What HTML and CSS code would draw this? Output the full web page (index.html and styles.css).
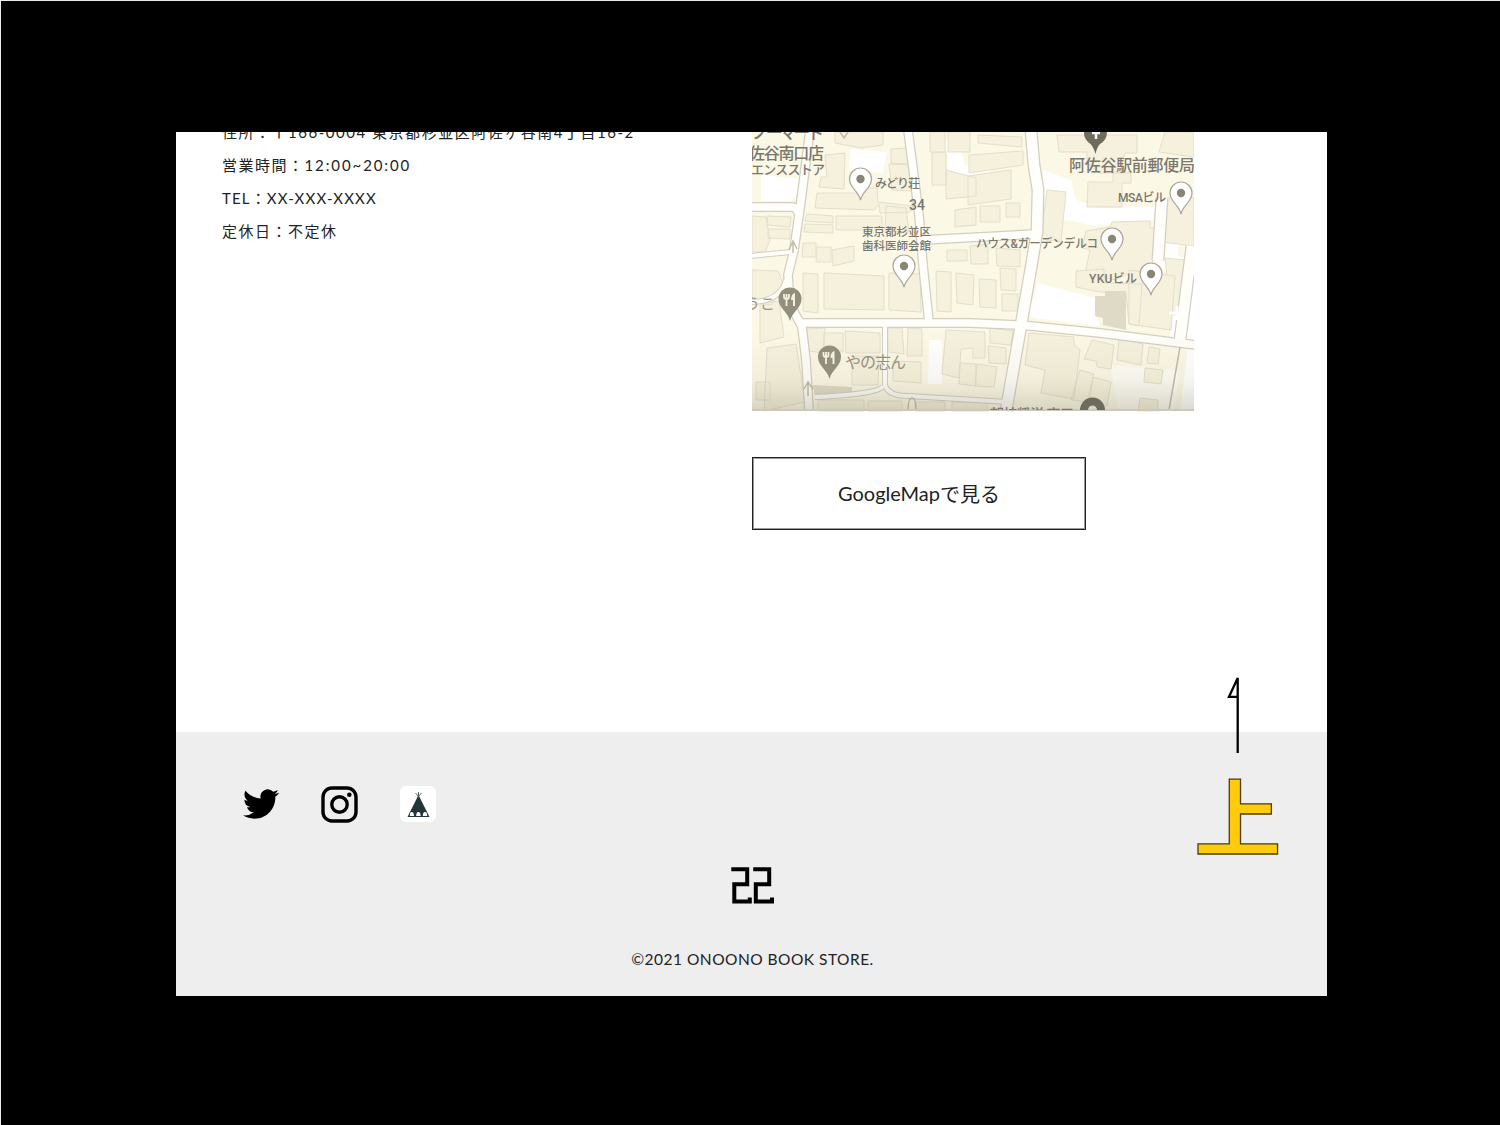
FILE: index.html
```html
<!DOCTYPE html>
<html lang="ja">
<head>
<meta charset="utf-8">
<title>ONOONO BOOK STORE</title>
<link rel="stylesheet" href="styles.css">
</head>
<body>
<div class="stage">
  <div class="window">
    <main class="access">
      <div class="info">
        <p class="info-line line-address">住所：〒166-0004 東京都杉並区阿佐ヶ谷南4丁目16-2</p>
        <p class="info-line line-hours">営業時間：<span>12:00~20:00</span></p>
        <p class="info-line line-tel"><span>TEL</span>：<span>XX-XXX-XXXX</span></p>
        <p class="info-line">定休日：不定休</p>
      </div>
      <div class="place">
        <svg class="map" viewBox="752 132 442 280" role="img" aria-label="地図">
          <defs>
            <linearGradient id="shade" x1="0" y1="0" x2="0" y2="1">
              <stop offset="0" stop-color="#8b8768" stop-opacity="0"/>
              <stop offset=".6" stop-color="#8b8768" stop-opacity=".08"/>
              <stop offset="1" stop-color="#77745c" stop-opacity=".28"/>
            </linearGradient>
            <g id="pin"><path d="M0 21C-2 12-11 9-11 0A11 11 0 0 1 11 0C11 9 2 12 0 21Z"/><circle r="4.2"/></g>
            <g id="food"><path class="food-body" d="M0 22C-2 13-11.500 9-11.500 0A11.500 11.500 0 0 1 11.500 0C11.500 9 2 13 0 22Z"/><path class="food-fork" d="M-6-5v3q0 2 2.500 2t2.500-2v-3M-3.500-5V7"/><path class="food-knife" d="M3 7V1H1Q1-5 5-6V7z"/></g>
          </defs>
          <rect class="ground" x="752" y="132" width="442" height="279"/>
          <g class="blank">
            <path d="M850 149l37 3-4 21-34-3zM761 175l39 4-3 15-5 7H761zM946 140h12l7 25 16 1 7-7 3 16H948zM1043 170l28 10 5 20 24 8 55-1-2 13-60 6-20-5-28-3z"/>
            <path d="M1038 283l34 9 23 6v16l5 12-66-8-6-5zM929 340h13v44h-14zM1160 206l20 5-2 45 16 6v150h-14l8-66-18-8 3-60-20-20z"/>
            <path opacity=".6" d="M1110 365l70 5-6 42h-55z"/>
          </g>
          <g class="building">
            <path d="M825 155l20-2-1 36-25-2 2-10h6zM817 193h40v-5h20l1 14 35 4-3 6-30 1-1-9-5 6-59-2zM807 214l26 2v7l-28-2zM805 224l28 1v8l-29-1zM836 216h46v14h-46zM886 206l20 2 3 24-24-1zM752 216l14 1 4 23-5 12h-13zM767 216l24 1-1 10-22-2zM768 229h22v10l-22-1zM803 243h13v14h-14zM817 247h14v15h-15zM832 250l22-4v15l-21 5z"/>
            <path d="M891 149l16-1 2 16-18-1zM889 164l23 1 3 26-23-1zM835 132h48v13l-22 3-26-5zM930 132h15v20h-15zM932 153l14-1v33h-14zM948 132h22v20h-22zM946 170l30 8v18l-30 3zM978 135l44 2v10l-44-4zM969 155l54-4v14l-54 8zM968 176l43-6v29l-43 6zM980 206h20v16h-20zM1006 203h14v14h-14zM955 210l21-3v18l-21 2zM947 250h20v11h-20zM970 246l18-2v20h-17zM996 248l24 2v17l-23-1z"/>
            <path d="M1057 135h80v18h-12l-5 20h-21l-12-10v-11h-28zM1165 132h29v25l-35-5zM1047 190l19 2-5 50-20-3zM1088 182h25v-9h18v10h-9v24h-35zM1086 231l24-4 2-5 38-1v7h5l-4 54 3 6-18-3-1-9-8-2-11 6-31-7 5-23-8-2zM1167 198h27v48l-32-4zM1165 258l20 2-4 56-10-2z"/>
            <path d="M803 273l15 1v39l-15-2zM824 273l60 3v34l-60-1zM889 273l31 1 1 38-32-2zM936 271l15 1v40l-14-1zM956 273l18 2-1 30-16-2zM979 279l17 1v28l-16-1zM1000 268l16 1v22l-15-1zM1002 294h16v17h-16zM752 270l26 1 6 14-13 20-19-2zM760 304l19-3 5 36-24 6zM767 348l29-4 9 58-41 9zM756 382h14v18h-14zM807 329l18-1-2 25-14-2zM824 333h19v19h-19zM845 331l35 2v20h-34zM852 356h27l-1 29h-26zM888 328h14l2 26-16-2zM908 328l14 1v27h-15zM893 361l28 1v21l-28-2zM946 330l39 2v26h-12v-10l-12 1-2 29-17-4zM960 363l16 1v22l-17-2zM977 364l20 3-3 20-19-1z"/>
            <path d="M990 328l23 3-2 14-21-2zM988 346l18 2v16l-17-1zM1029 333l45 4v8l6 5-6 49-33-6 4-23-20-5zM1080 370l14 4-7 28-16-2zM1093 377l18 5-4 24h-18zM1092 340l22 5-3 24-14-2-1-6-12-2zM1119 339l24 5-2 21-24-5zM1149 347l11 2-2 15-11-1zM1145 368l18 2-2 14-17-2zM1076 271l28-2v14l38 1-3 42-10-2-3-31-26-1-24-5zM1129 270l46 6-4 54-42-6z"/>
            <path d="M818 400h46v11h-46zM868 401h34v10h-34zM915 402h30v9h-30zM952 402h35v9h-35zM1140 398l18 2v11h-20z"/>
          </g>
          <path class="building-dark" d="M1105 291h21v39l-23-5v-7l-8-2v-20h10zM813 385l39 2v9l-37 1z"/>
          <g class="road-edge">
            <path class="wide" d="M810 130L801 201 794 250 788 275 790 304 802 327 806 360 809 411"/>
            <path class="wide" d="M908 130L919 215 923 265 929 322"/>
            <path class="wide-xl" d="M1031 130L1034 165 1038 190 1037 232 1031 268 1021 325 1006 411"/>
            <path class="wide" d="M798 323H970L1021 325M1021 325L1100 333 1196 345"/>
            <path class="wide" d="M923 240L1036 234M750 207H791Q798 207 799 216"/>
            <path class="thin" d="M750 256L791 252M750 302Q780 302 786 280M885 325V385Q888 396 908 396L1008 402M883 386Q880 394 815 397"/>
            <path class="wide-xl" d="M1162 198L1158 260M1192 246L1180 340"/>
          </g>
          <g class="road">
            <path class="wide" d="M810 130L801 201 794 250 788 275 790 304 802 327 806 360 809 411"/>
            <path class="wide" d="M908 130L919 215 923 265 929 322"/>
            <path class="wide-xl" d="M1031 130L1034 165 1038 190 1037 232 1031 268 1021 325 1006 411"/>
            <path class="wide" d="M798 323H970L1021 325M1021 325L1100 333 1196 345"/>
            <path class="wide" d="M923 240L1036 234M750 207H791Q798 207 799 216"/>
            <path class="thin" d="M750 256L791 252M750 302Q780 302 786 280M885 325V385Q888 396 908 396L1008 402M883 386Q880 394 815 397"/>
            <path class="wide-xl" d="M1162 198L1158 260M1192 246L1180 340"/>
          </g>
          <path class="road-line" d="M1180 347L1169 410M789 250l4-9 4 8M793 241v12M804 389l4-7 5 7M808 383v13M908 410q0-12 4-12t4 12M840 132l4 6 4-6"/>
          <path class="crossing" d="M1169 313h16M1177 306v14"/>
          <rect x="752" y="330" width="442" height="81" fill="url(#shade)"/>
          <path class="map-edge" d="M752 410H1194"/>
          <use href="#pin" x="860.5" y="179"/>
          <use href="#pin" x="904" y="266"/>
          <use href="#pin" x="1181" y="193"/>
          <use href="#pin" x="1112" y="239"/>
          <use href="#pin" x="1151" y="274"/>
          <use href="#food" x="790" y="299"/>
          <use href="#food" x="829.500" y="357"/>
          <path class="pin-dark" d="M1084 132h23q0 8-7 12-3 3-4.500 10-2-7-5-10-7-5-6.500-12zM1080 410a12.500 12.500 0 0 1 25 0h-8a4.500 4.500 0 0 0-9 0z"/>
          <path class="pin-mark" d="M1092 133h8M1096 132v7"/>
          <g class="label">
            <text x="752" y="139" font-size="17" textLength="72">ノーマート</text>
            <text x="749" y="159" font-size="16" textLength="75">佐谷南口店</text>
            <text x="751" y="174" font-size="13" textLength="74">エンスストア</text>
            <text x="875" y="188" font-size="12" textLength="45">みどり荘</text>
            <text x="909" y="210" font-size="14" textLength="16">34</text>
            <text x="862" y="236" font-size="11.500" textLength="69">東京都杉並区</text>
            <text x="862" y="249.500" font-size="11.500" textLength="69">歯科医師会館</text>
            <text x="1069" y="171" font-size="16" textLength="126">阿佐谷駅前郵便局</text>
            <text x="1118" y="202" font-size="12" textLength="48">MSAビル</text>
            <text x="976" y="248" font-size="12" textLength="122" lengthAdjust="spacingAndGlyphs">ハウス&amp;ガーデンデルコ</text>
            <text x="1089" y="283" font-size="12" textLength="48">YKUビル</text>
            <text class="soft" x="745" y="309" font-size="15" textLength="30">うこ</text>
            <text class="soft" x="845" y="368" font-size="16" textLength="61">やの志ん</text>
          </g>
          <svg x="985" y="404" width="90" height="6" viewBox="985 404 90 6"><text class="label" x="990" y="419" font-size="14" textLength="84">朝焼醤洋 南口</text></svg>
        </svg>
        <a class="map-button" href="#">GoogleMap<span>で見る</span></a>
      </div>
    </main>
    <footer class="footer">
      <nav class="social">
        <a href="#" aria-label="Twitter"><svg class="twitter" viewBox="0 0 24 24"><path d="M23.953 4.57a10 10 0 01-2.825.775 4.958 4.958 0 002.163-2.723c-.951.555-2.005.959-3.127 1.184a4.920 4.920 0 00-8.384 4.482C7.690 8.095 4.067 6.130 1.640 3.162a4.822 4.822 0 00-.666 2.475c0 1.710.870 3.213 2.188 4.096a4.904 4.904 0 01-2.228-.616v.060a4.923 4.923 0 003.946 4.827 4.996 4.996 0 01-2.212.085 4.936 4.936 0 004.604 3.417 9.867 9.867 0 01-6.102 2.105c-.390 0-.779-.023-1.170-.067a13.995 13.995 0 007.557 2.209c9.053 0 13.998-7.496 13.998-13.985 0-.210 0-.420-.015-.630A9.935 9.935 0 0024 4.590z"/></svg></a>
        <a href="#" aria-label="Instagram"><svg class="instagram" viewBox="0 0 37 37"><rect x="2" y="2" width="33" height="33" rx="9"/><circle cx="18.500" cy="18.500" r="7.700"/><circle class="dot" cx="28.300" cy="8.800" r="2.300"/></svg></a>
        <a href="#" aria-label="Shop"><svg class="shop" viewBox="0 0 36 36"><rect width="36" height="36" rx="6" fill="#fff"/><path d="M18.500 9L29.500 31H7.500z" fill="#26343b"/><path d="M15.500 7l4.500 5M21.500 7l-4.500 5M18.500 6v5" stroke="#55605f" stroke-width="1" fill="none"/><path d="M9.800 30q0-4 2-4t2.200 4zM16.200 30q0-4 2.200-4t2.200 4zM22.800 30q0-4 2.200-4t2.200 4z" fill="#fff"/></svg></a>
      </nav>
      <svg class="logo" viewBox="0 0 43 38" role="img" aria-label="22"><path d="M.3 2.200H16.200V17.300H3.300V34.500H18.800V30.500M22.200 2.200H38.200V17.300H24.800V34.500H41V30.500" fill="none" stroke="#000" stroke-width="4"/></svg>
      <p class="copyright">©2021 ONOONO BOOK STORE.</p>
    </footer>
    <a class="to-top" href="#" aria-label="上へ">
      <svg viewBox="0 0 84 184">
        <path d="M41.700 77V2L33 20.800H41" fill="none" stroke="#000" stroke-width="2.300"/>
        <text transform="translate(41.800 173.700) scale(1 .97)" text-anchor="middle">上</text>
      </svg>
    </a>
  </div>
</div>
</body>
</html>
```
FILE: styles.css
```css
* { box-sizing: border-box; }
body {
  margin: 0;
  color: #222;
  font-family: Lato, "Noto Sans CJK JP", sans-serif;
}
a { color: inherit; text-decoration: none; }
p { margin: 0; }
svg { display: block; }

.stage {
  width: 1500px;
  height: 1125px;
  padding: 131px 172px 129px 175px;
  background: #000;
  border-top: 1px solid #e9eeec;
  border-left: 1px solid #e9eeec;
}
.window {
  position: relative;
  display: flex;
  flex-direction: column;
  width: 1151px;
  height: 863.500px;
  overflow: hidden;
  background: #fff;
}

.access {
  display: flex;
  height: 599.500px;
  padding-left: 46px;
}
.info {
  width: 530px;
  margin-top: -16px;
}
.info-line {
  height: 33px;
  line-height: 32px;
  font-size: 15px;
  letter-spacing: 1.5px;
  white-space: nowrap;
}
.line-address { letter-spacing: 1.520px; }
.line-hours span { letter-spacing: 1.900px; }
.line-tel { letter-spacing: 1.150px; }
.place { width: 442px; }
.map {
  width: 442px;
  height: 280px;
}
.map-button {
  display: flex;
  align-items: center;
  justify-content: center;
  width: 334px;
  height: 73px;
  margin-top: 45px;
  padding-bottom: 1px;
  border: 1px solid #222;
  box-shadow: inset 0 0 0 1px #999;
  font-size: 20px;
}

.ground { fill: #fcf8e6; }
.blank { fill: #fff; }
.building { fill: #f6f1dc; stroke: #e4decb; stroke-width: 1; }
.building-dark { fill: #dedac6; }
.road-edge, .road { fill: none; stroke-linejoin: round; }
.road-edge { stroke: #d3cfc0; }
.road { stroke: #fffefb; }
.road-edge .wide { stroke-width: 10; }
.road .wide { stroke-width: 7.500; }
.road-edge .wide-xl { stroke-width: 13; }
.road .wide-xl { stroke-width: 10.500; }
.road-edge .thin { stroke-width: 6; }
.road .thin { stroke-width: 4; }
.road-line { fill: none; stroke: #c1bda9; stroke-width: 1.500; }
.crossing { stroke: #fff; stroke-width: 3; }
.map-edge { stroke: #cbc9bb; stroke-width: 2; }
#pin path { fill: #fff; stroke: #aaa799; stroke-width: 1.200; }
#pin circle { fill: #898675; }
.food-body { fill: #928f7d; }
.food-fork { fill: none; stroke: #f5f1e0; stroke-width: 1.800; }
.food-knife { fill: #f5f1e0; }
.pin-dark { fill: #6e6a5c; }
.pin-mark { stroke: #fff; stroke-width: 2.500; }
.label {
  fill: #7b776d;
  font-family: Roboto, "Noto Sans CJK JP", sans-serif;
  font-weight: 500;
}
.label .soft { fill: #95917f; font-weight: 400; }

.footer {
  display: flex;
  flex: 1;
  flex-direction: column;
  align-items: center;
  background: #eee;
}
.social {
  display: flex;
  align-self: flex-start;
  align-items: center;
  gap: 42px;
  height: 37px;
  margin: 54px 0 0 67px;
}
.twitter, .shop { width: 36px; height: 36px; }
.instagram {
  width: 37px;
  height: 37px;
  fill: none;
  stroke: #000;
  stroke-width: 3.400;
}
.instagram .dot { fill: #000; stroke: none; }
.logo {
  width: 43px;
  height: 38px;
  margin: 44px 0 0 2px;
}
.copyright {
  margin: 44px 0 0 2px;
  line-height: 20px;
  font-size: 15.500px;
  letter-spacing: .48px;
}

.to-top {
  position: absolute;
  top: 544px;
  left: 1020px;
}
.to-top svg { width: 84px; height: 184px; }
.to-top text {
  fill: #ffcc0d;
  stroke: #4a3c12;
  stroke-width: 1.300;
  font-family: "Noto Sans CJK JP", sans-serif;
  font-size: 87px;
  font-weight: 700;
}
```
